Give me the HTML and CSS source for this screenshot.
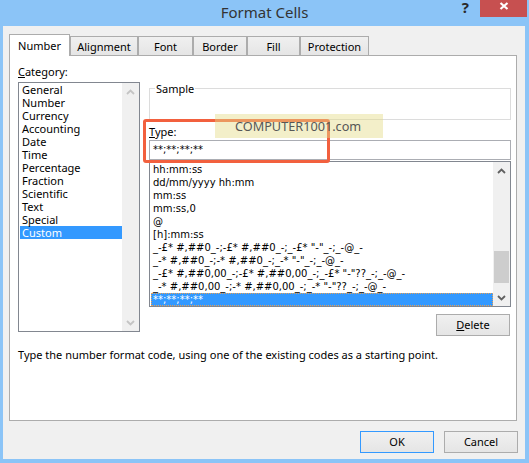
FILE: index.html
```html
<!DOCTYPE html>
<html>
<head>
<meta charset="utf-8">
<link rel="stylesheet" href="styles.css">
</head>
<body>
<div class="window">
  <div class="titlebar">
    <div class="title">Format Cells</div>
    <div class="controls">
      <span class="help">?</span>
      <div class="close"><svg width="10" height="8" viewBox="0 0 10 8"><path d="M1.5 1 L8.5 7 M8.5 1 L1.5 7" stroke="#fff" stroke-width="2.2" fill="none"/></svg></div>
    </div>
  </div>
  <div class="body">
    <div class="tabs">
      <div class="tab selected t-number">Number</div>
      <div class="tab t-align">Alignment</div>
      <div class="tab t-font">Font</div>
      <div class="tab t-border">Border</div>
      <div class="tab t-fill">Fill</div>
      <div class="tab t-prot">Protection</div>
    </div>
    <div class="panel">
      <div class="content">
        <div class="leftcol">
          <div class="label"><u>C</u>ategory:</div>
          <div class="listbox cat">
            <div class="items">
              <div class="item">General</div>
              <div class="item">Number</div>
              <div class="item">Currency</div>
              <div class="item">Accounting</div>
              <div class="item">Date</div>
              <div class="item">Time</div>
              <div class="item">Percentage</div>
              <div class="item">Fraction</div>
              <div class="item">Scientific</div>
              <div class="item">Text</div>
              <div class="item">Special</div>
              <div class="item sel">Custom</div>
            </div>
            <div class="scrollbar disabled">
              <div class="arrow"><svg width="9" height="6" viewBox="0 0 9 6"><path d="M1 5 L4.5 1.5 L8 5" stroke="currentColor" stroke-width="1.8" fill="none"/></svg></div>
              <div class="track"></div>
              <div class="arrow"><svg width="9" height="6" viewBox="0 0 9 6"><path d="M1 1 L4.5 4.5 L8 1" stroke="currentColor" stroke-width="1.8" fill="none"/></svg></div>
            </div>
          </div>
        </div>
        <div class="rightcol">
          <div class="sample"><span class="legend">Sample</span></div>
          <div class="label typelabel"><u>T</u>ype:</div>
          <div class="input">**;**;**;**</div>
          <div class="listbox typelist">
            <div class="items mono">
              <div class="item">hh:mm:ss</div>
              <div class="item">dd/mm/yyyy hh:mm</div>
              <div class="item">mm:ss</div>
              <div class="item">mm:ss,0</div>
              <div class="item">@</div>
              <div class="item">[h]:mm:ss</div>
              <div class="item">_-£* #,##0_-;-£* #,##0_-;_-£* "-"_-;_-@_-</div>
              <div class="item">_-* #,##0_-;-* #,##0_-;_-* "-"_-;_-@_-</div>
              <div class="item">_-£* #,##0,00_-;-£* #,##0,00_-;_-£* "-"??_-;_-@_-</div>
              <div class="item">_-* #,##0,00_-;-* #,##0,00_-;_-* "-"??_-;_-@_-</div>
              <div class="item sel focus">**;**;**;**</div>
            </div>
            <div class="scrollbar">
              <div class="arrow"><svg width="9" height="6" viewBox="0 0 9 6"><path d="M1 5 L4.5 1.5 L8 5" stroke="currentColor" stroke-width="1.8" fill="none"/></svg></div>
              <div class="track"><div class="thumb"></div></div>
              <div class="arrow"><svg width="9" height="6" viewBox="0 0 9 6"><path d="M1 1 L4.5 4.5 L8 1" stroke="currentColor" stroke-width="1.8" fill="none"/></svg></div>
            </div>
          </div>
          <div class="btn delete"><u>D</u>elete</div>
        </div>
      </div>
      <div class="desc">Type the number format code, using one of the existing codes as a starting point.</div>
    </div>
    <div class="buttons">
      <div class="btn ok">OK</div>
      <div class="btn cancel">Cancel</div>
    </div>
  </div>
  <div class="annot"></div>
  <div class="watermark">COMPUTER1001.com</div>
</div>
</body>
</html>
```
FILE: styles.css
```css
* { box-sizing: border-box; }
html, body { margin: 0; padding: 0; }
body {
  width: 529px;
  height: 463px;
  overflow: hidden;
  font-family: "Noto Sans", "Segoe UI", sans-serif;
  font-size: 11px;
  color: #000;
}
.window {
  position: relative;
  width: 529px;
  height: 463px;
  background: #8bc4f7;
  display: flex;
  flex-direction: column;
}
.titlebar {
  height: 26px;
  flex: none;
  display: grid;
  grid-template-columns: 1fr auto 1fr;
}
.title {
  grid-column: 2;
  font-size: 15px;
  line-height: 24px;
  color: #333;
}
.controls {
  grid-column: 3;
  display: flex;
  justify-content: flex-end;
  align-items: flex-start;
}
.help {
  font-weight: bold;
  font-size: 15px;
  line-height: 15px;
  color: #2a2a2a;
  margin-right: 11px;
}
.close {
  width: 47px;
  height: 17px;
  background: #c75050;
  margin-right: 2px;
  display: flex;
  justify-content: center;
  padding-top: 2px;
}
.close svg { display: block; }
.body {
  flex: 1;
  margin: 0 4px 4px 3px;
  background: #f0f0f0;
  padding: 8px 8px 0 6px;
  display: flex;
  flex-direction: column;
}
.tabs {
  display: flex;
  align-items: flex-end;
  height: 21px;
}
.tab {
  height: 19px;
  border: 1px solid #acacac;
  border-bottom: none;
  background: linear-gradient(#f0f0f0, #e5e5e5);
  text-align: center;
  line-height: 17px;
  padding-top: 1px;
}
.tab.selected {
  height: 22px;
  margin-bottom: -1px;
  background: #fff;
  position: relative;
  z-index: 1;
  line-height: 19px;
}
.t-number { width: 61px; }
.t-align { width: 68px; }
.t-font { width: 55px; }
.t-border { width: 54px; }
.t-fill { width: 53px; }
.t-prot { width: 69px; }
.panel {
  height: 366px;
  border: 1px solid #acacac;
  background: #fff;
  padding: 8px 5px 0 8px;
}
.content {
  display: grid;
  grid-template-columns: 122px 362px;
  column-gap: 9px;
  align-items: start;
}
.label { line-height: 15px; }
.listbox {
  border: 1px solid #828790;
  display: grid;
  grid-template-columns: 1fr 17px;
  padding-left: 1px;
  overflow: hidden;
}
.cat {
  margin-top: 3px;
  height: 250px;
}
.items {
  padding-top: 1px;
  overflow: hidden;
}
.cat .items { padding-top: 0; }
.item {
  height: 13px;
  line-height: 13px;
  padding-left: 2px;
  white-space: nowrap;
}
.item.sel {
  background: #3399ff;
  color: #fff;
}
.item.focus {
  outline: 1px dotted #e8a054;
  outline-offset: -1px;
}
.scrollbar {
  background: #f0f0f0;
  display: flex;
  flex-direction: column;
  color: #606060;
}
.scrollbar.disabled { color: #c4c4c4; }
.arrow {
  height: 17px;
  flex: none;
  display: flex;
  align-items: center;
  justify-content: center;
}
.arrow svg { display: block; }
.track { flex: 1; }
.thumb {
  margin: 72px 1px 0;
  height: 32px;
  background: #cdcdcd;
}
.rightcol {
  display: flex;
  flex-direction: column;
}
.sample {
  margin-top: 24px;
  height: 32px;
  border: 1px solid #dcdcdc;
}
.legend {
  display: inline-block;
  line-height: 15px;
  margin-top: -8px;
  margin-left: 5px;
  padding: 0 1px;
  background: #fff;
  vertical-align: top;
}
.typelabel { margin-top: 4px; }
.input {
  margin-top: 1px;
  height: 20px;
  border: 1px solid #abadb3;
  padding-left: 3px;
  line-height: 18px;
  font-family: "DejaVu Sans", sans-serif;
  font-size: 10px;
}
.mono {
  font-family: "DejaVu Sans", sans-serif;
  font-size: 10px;
}
.typelist {
  margin-top: 1px;
  height: 146px;
}
.btn {
  height: 22px;
  border: 1px solid #acacac;
  background: linear-gradient(#f0f0f0, #e5e5e5);
  text-align: center;
  line-height: 20px;
}
.delete {
  margin-top: 7px;
  width: 74px;
  align-self: flex-end;
  margin-right: 1px;
}
.desc {
  margin-top: 11px;
  line-height: 15px;
}
.buttons {
  margin-top: 10px;
  margin-right: -1px;
  display: flex;
  justify-content: flex-end;
  gap: 10px;
}
.buttons .btn { width: 74px; }
.ok { border-color: #3399ff; }
.annot {
  position: absolute;
  left: 143px;
  top: 119px;
  width: 187px;
  height: 44px;
  border: 3px solid #f2603e;
  border-radius: 3px;
}
.watermark {
  position: absolute;
  left: 215px;
  top: 114px;
  width: 168px;
  height: 24px;
  background: rgba(228, 219, 135, 0.45);
  padding-left: 20px;
  font-size: 12.7px;
  line-height: 25px;
  color: #575757;
  white-space: nowrap;
}
```
